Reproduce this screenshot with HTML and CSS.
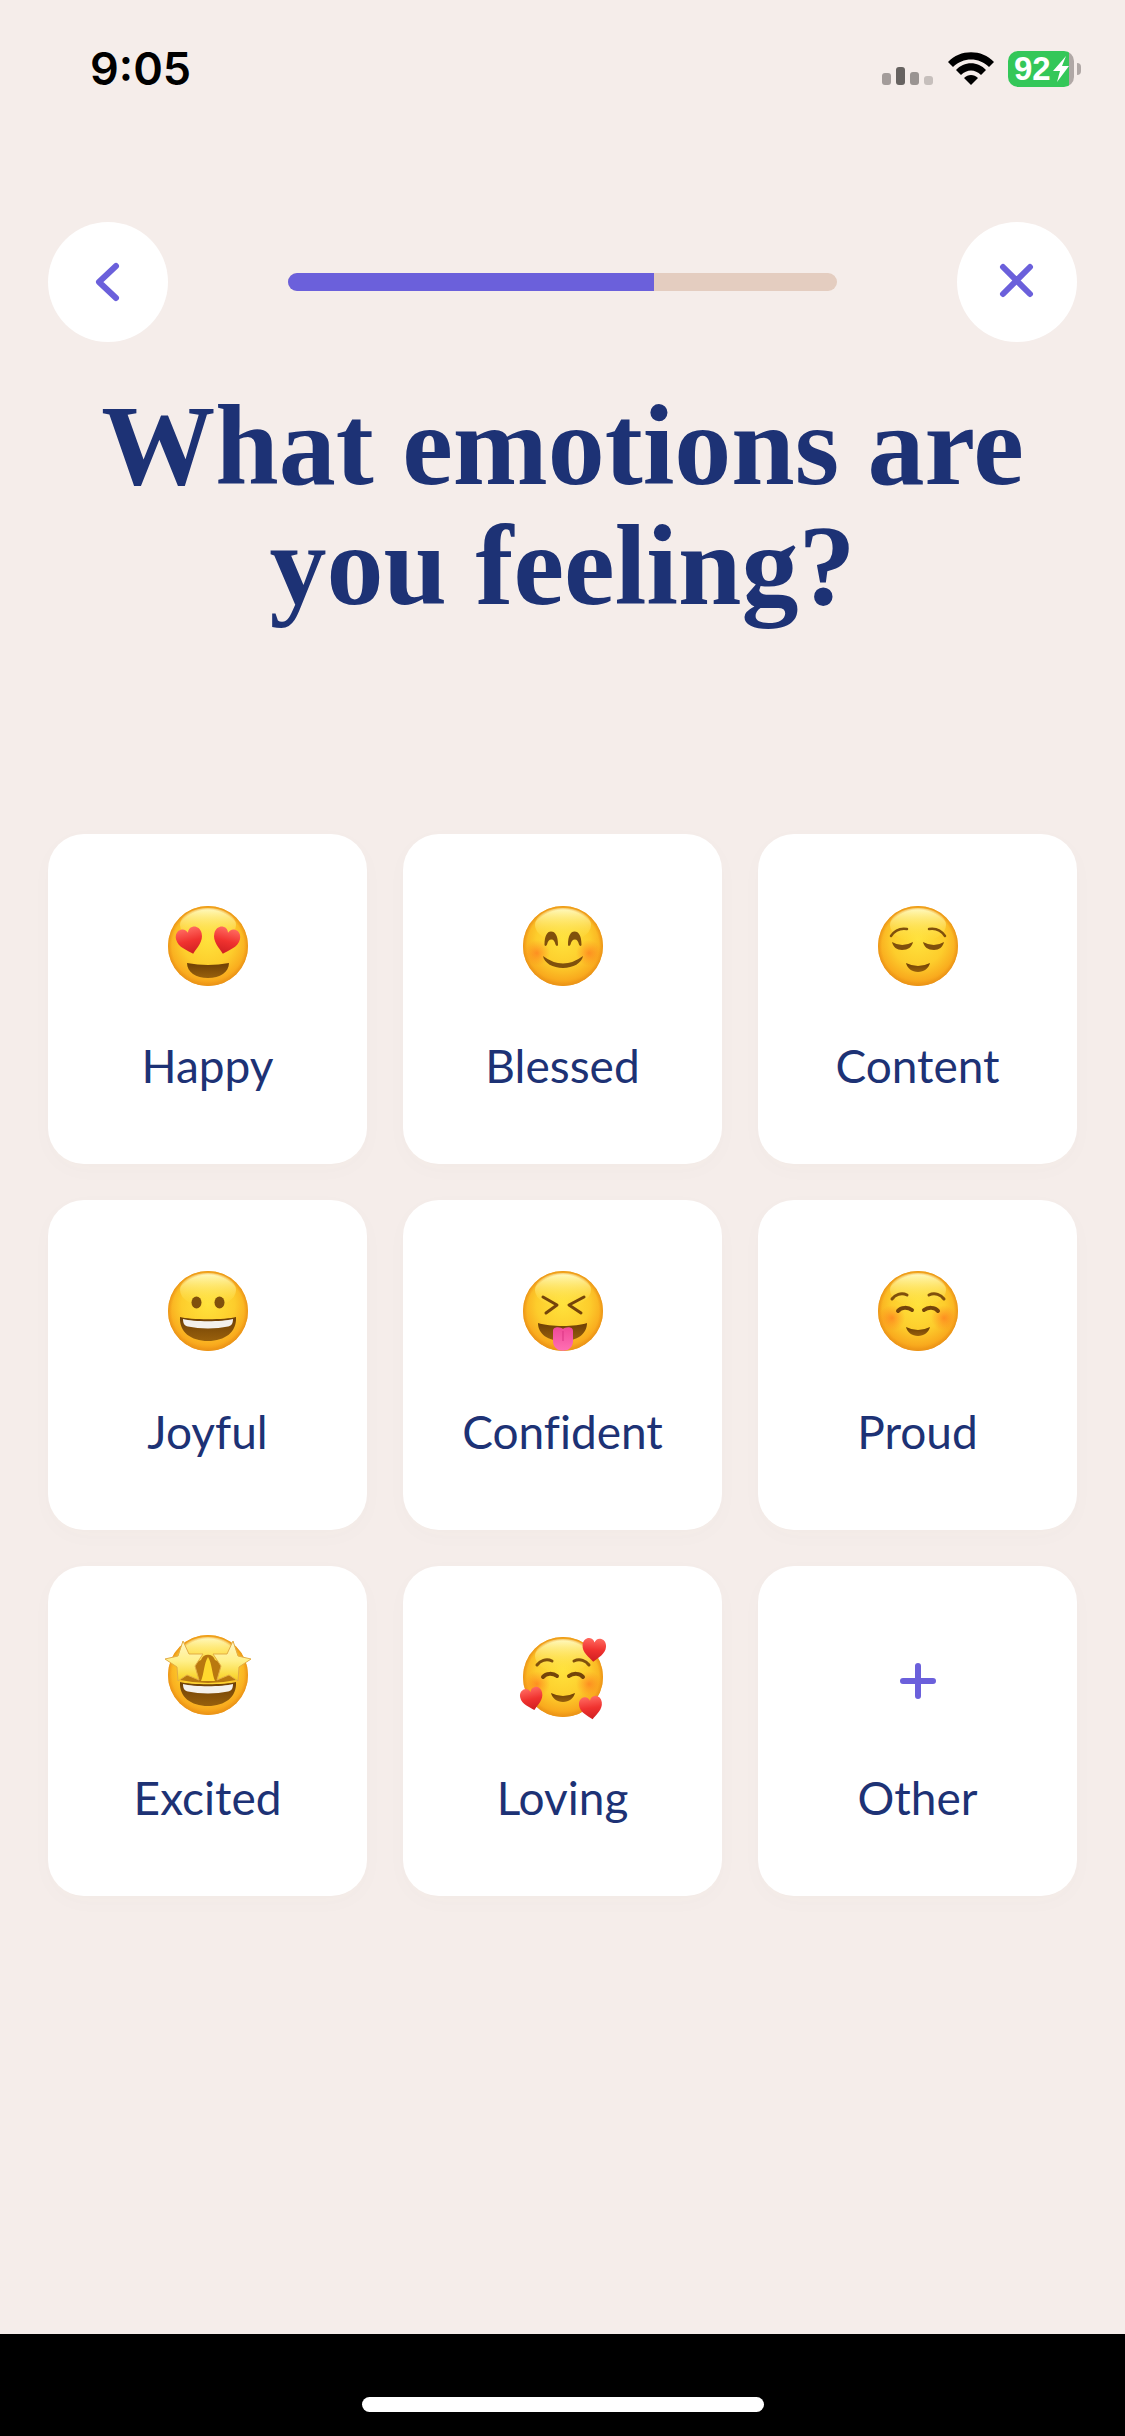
FILE: index.html
```html
<!DOCTYPE html>
<html lang="en">
<head>
<meta charset="utf-8">
<meta name="viewport" content="width=device-width, initial-scale=1">
<title>What emotions are you feeling?</title>
<link rel="stylesheet" href="styles.css">
</head>
<body>
<div class="screen">
  <div class="status">
    <span class="status-time">9:05</span>
    <div class="status-icons">
      <svg class="signal" viewBox="0 0 52 36" aria-hidden="true">
        <rect x="0" y="22" width="9" height="12" rx="3" fill="#a39c9a"/>
        <rect x="14" y="16" width="9" height="18" rx="3" fill="#676361"/>
        <rect x="28" y="21" width="9" height="13" rx="3" fill="#9a9492"/>
        <rect x="42" y="25" width="9" height="9" rx="3" fill="#c6bfbc"/>
      </svg>
      <svg class="wifi" viewBox="0 0 46 36" aria-hidden="true">
        <path d="M0 11 C12 -2 34 -2 46 11 L41 16 C31 6 15 6 5 16 Z"/>
        <path d="M8 19 C16 10 30 10 38 19 L33 24 C27 18 19 18 13 24 Z"/>
        <path d="M16 27 C20 23 26 23 30 27 L23 34 Z"/>
      </svg>
      <div class="battery">
        <span class="battery-body"><span class="battery-level">92</span>
          <svg class="bolt" viewBox="0 0 16 26" aria-hidden="true"><path d="M13 0 L0 15 H7 L4 26 L16 10 H9 Z" fill="#fff"/></svg>
        </span>
        <span class="battery-cap"></span>
      </div>
    </div>
  </div>

  <header class="topbar">
    <button class="round" type="button" aria-label="Back">
      <svg viewBox="0 0 48 48" aria-hidden="true"><path d="M32 8 L15 24 L32 40"/></svg>
    </button>
    <progress class="steps" value="2" max="3" aria-label="Progress"></progress>
    <button class="round" type="button" aria-label="Close">
      <svg viewBox="0 0 48 48" aria-hidden="true"><path d="M10 9 L37 36 M37 9 L10 36"/></svg>
    </button>
  </header>

  <main class="content">
    <h1 class="title">What emotions are you feeling?</h1>
    <div class="grid">
      <button class="card" type="button">
        <svg class="emoji" viewBox="0 0 96 96" aria-hidden="true">
          <defs>
            <radialGradient id="face" cx=".5" cy=".42" r=".6">
              <stop offset="0" stop-color="#ffe23c"/><stop offset=".55" stop-color="#fdcd2c"/>
              <stop offset=".84" stop-color="#f9ab1e"/><stop offset="1" stop-color="#ea8c12"/>
            </radialGradient>
            <radialGradient id="rim">
              <stop offset=".9" stop-color="#f09a18" stop-opacity="0"/><stop offset="1" stop-color="#ea9418"/>
            </radialGradient>
            <linearGradient id="shine" x1="0" y1="0" x2="0" y2="1">
              <stop offset="0" stop-color="#fffbc4"/><stop offset="1" stop-color="#ffe63f" stop-opacity="0"/>
            </linearGradient>
            <radialGradient id="blush">
              <stop offset="0" stop-color="#ff6a1c" stop-opacity=".6"/><stop offset="1" stop-color="#ff7a1c" stop-opacity="0"/>
            </radialGradient>
            <linearGradient id="red" x1="0" y1="0" x2="0" y2="1">
              <stop offset="0" stop-color="#ff6a60"/><stop offset=".5" stop-color="#f0322f"/><stop offset="1" stop-color="#cf1f22"/>
            </linearGradient>
            <linearGradient id="brown" x1="0" y1="0" x2="0" y2="1">
              <stop offset="0" stop-color="#6e3f05"/><stop offset="1" stop-color="#98600c"/>
            </linearGradient>
            <linearGradient id="gold" x1="0" y1="0" x2="0" y2="1">
              <stop offset="0" stop-color="#fff6c8"/><stop offset=".5" stop-color="#fff08a"/><stop offset="1" stop-color="#f8cf1c"/>
            </linearGradient>
            <linearGradient id="tongue" x1="0" y1="0" x2="0" y2="1">
              <stop offset="0" stop-color="#f04a97"/><stop offset="1" stop-color="#ff6fb4"/>
            </linearGradient>
            <g id="head">
              <circle cx="48" cy="48" r="40" fill="url(#face)"/>
              <ellipse cx="48" cy="27" rx="28" ry="17" fill="url(#shine)"/>
              <circle cx="48" cy="48" r="40" fill="url(#rim)"/>
            </g>
            <g id="cheeks"><circle cx="22" cy="55" r="13" fill="url(#blush)"/><circle cx="74" cy="55" r="13" fill="url(#blush)"/></g>
            <path id="heart" d="M0 14 C-5 9 -14 4 -14 -5 C-14 -11 -10 -14 -6.500 -14 C-3 -14 -1 -12 0 -9 C1 -12 3 -14 6.500 -14 C10 -14 14 -11 14 -5 C14 4 5 9 0 14Z" fill="url(#red)"/>
            <g id="brows" fill="none" stroke="#80500c" stroke-width="3" stroke-linecap="round">
              <path d="M22 36 C25 32 31 29 37 32"/><path d="M74 36 C71 32 65 29 59 32"/>
            </g>
            <g id="smile" fill="url(#brown)">
              <path d="M36 64 Q48 70 60 64 C59 69 54 73 48 73 C42 73 37 69 36 64Z"/>
            </g>
            <g id="soft-eyes" fill="none" stroke="#74440a" stroke-width="4" stroke-linecap="round">
              <path d="M28 47 C31 43 38 43 42 46"/><path d="M68 47 C65 43 58 43 54 46"/>
            </g>
            <g id="grin">
              <path d="M20 53 C30 56 66 56 76 53 C77 68 65 77 48 77 C31 77 19 68 20 53Z" fill="url(#brown)"/>
              <path d="M23 55 C34 58 62 58 73 55 C73 60 71 62 68 62.500 C56 65 40 65 28 62.500 C25 62 23 60 23 55Z" fill="#f4f1ec"/>
            </g>
          </defs>
          <use href="#head"/>
          <use href="#heart" transform="translate(30 43) rotate(-14) scale(.94)"/>
          <use href="#heart" transform="translate(66 43) rotate(14) scale(.94)"/>
          <path d="M27 65 Q48 69 69 65 C69 74 60 80 48 80 C36 80 27 74 27 65Z" fill="url(#brown)"/>
        </svg>
        <span>Happy</span>
      </button>
      <button class="card" type="button">
        <svg class="emoji" viewBox="0 0 96 96" aria-hidden="true">
          <use href="#head"/><use href="#cheeks"/>
          <g fill="#80500c">
            <path id="arch" d="M29.500 47 C29.500 38 32 33.500 36 33.500 C40.500 33.500 43 38 43 47 C42.500 48.500 41 48 40.500 46.500 C39.500 43 38.500 41.500 36.500 41.500 C34 41.500 33 43 32 46.500 C31.500 48 30 48.500 29.500 47Z"/>
            <use href="#arch" x="23.500"/>
          </g>
          <path d="M28 58 Q48 73 68 58 C67 65 58 70 48 70 C38 70 29 65 28 58Z" fill="#80500c"/>
        </svg>
        <span>Blessed</span>
      </button>
      <button class="card" type="button">
        <svg class="emoji" viewBox="0 0 96 96" aria-hidden="true">
          <use href="#head"/>
          <g fill="none" stroke="#80500c" stroke-width="2.500" stroke-linecap="round">
            <path d="M21 38 C25 32 31 30 37 31"/><path d="M75 38 C71 32 65 30 59 31"/>
          </g>
          <g fill="#80500c">
            <path d="M22 44 Q32 50 43 44 C42 49 38 52 32 52 C27 52 23 49 22 44Z"/>
            <path d="M74 44 Q64 50 53 44 C54 49 58 52 64 52 C69 52 73 49 74 44Z"/>
          </g>
          <use href="#smile" y="1"/>
        </svg>
        <span>Content</span>
      </button>
      <button class="card" type="button">
        <svg class="emoji" viewBox="0 0 96 96" aria-hidden="true">
          <use href="#head" y="-1"/>
          <ellipse cx="36.500" cy="38.500" rx="5" ry="6" fill="#80500c"/><ellipse cx="59.500" cy="38.500" rx="5" ry="6" fill="#80500c"/>
          <use href="#grin"/>
        </svg>
        <span>Joyful</span>
      </button>
      <button class="card" type="button">
        <svg class="emoji" viewBox="0 0 96 96" aria-hidden="true">
          <use href="#head" y="-1"/>
          <g fill="none" stroke="#74440a" stroke-width="3" stroke-linecap="round" stroke-linejoin="round">
            <path d="M28 33 L42 41 L31 49"/><path d="M69 33 L54 41 L66 49"/>
          </g>
          <path d="M23 59 C35 63 61 63 72 59 C72 70 62 77 48 77 C33 77 23 70 23 59Z" fill="url(#brown)"/>
          <path d="M38 67 C38 62 46 63 48 65 C50 63 58 62 58 67 V77 C58 90 38 90 38 77Z" fill="url(#tongue)"/>
          <path d="M48 67 V77" stroke="#d93483" stroke-width="1"/>
        </svg>
        <span>Confident</span>
      </button>
      <button class="card" type="button">
        <svg class="emoji" viewBox="0 0 96 96" aria-hidden="true">
          <use href="#head" y="-1"/><use href="#cheeks" y="-1"/><use href="#brows" y="-1"/><use href="#soft-eyes"/><use href="#smile" y="-1"/>
        </svg>
        <span>Proud</span>
      </button>
      <button class="card" type="button">
        <svg class="emoji" viewBox="0 0 96 96" aria-hidden="true">
          <use href="#head" y="-3"/>
          <path d="M20 50 C22 38 36 32 41 30 C43 23 53 23 55 30 C60 32 74 38 76 50 Q48 56 20 50Z" fill="#b9780f"/>
          <path d="M48 27 C52 33 52 44 55 51 H41 C44 44 44 33 48 27Z" fill="#ffd92e"/>
          <g fill="url(#gold)" stroke="#e3ad45" stroke-width="1" stroke-linejoin="round">
            <path d="M23 11 L29 24 L43 24 L35 36 L39 50 L27 45 L18 51 L17 37 L5 29 L18 26Z"/>
            <path d="M73 11 L67 24 L53 24 L61 36 L57 50 L69 45 L78 51 L79 37 L91 29 L78 26Z"/>
          </g>
          <use href="#grin" y="-1"/>
        </svg>
        <span>Excited</span>
      </button>
      <button class="card" type="button">
        <svg class="emoji" viewBox="0 0 96 96" aria-hidden="true">
          <use href="#head" y="-1"/><use href="#cheeks" y="-1"/><use href="#brows" y="-1"/><use href="#soft-eyes"/><use href="#smile" y="-1"/>
          <use href="#heart" transform="translate(79 20) rotate(4) scale(.84)"/>
          <use href="#heart" transform="translate(17 69) rotate(-12) scale(.8)"/>
          <use href="#heart" transform="translate(76 78) rotate(-8) scale(.82)"/>
        </svg>
        <span>Loving</span>
      </button>
      <button class="card" type="button">
        <svg class="emoji" viewBox="0 0 96 96" aria-hidden="true">
          <path d="M48 36 V66 M33 51 H63" stroke="#6b60db" stroke-width="6" stroke-linecap="round"/>
        </svg>
        <span>Other</span>
      </button>
    </div>
  </main>

  <footer class="homebar"><span class="home-indicator"></span></footer>
</div>
</body>
</html>
```
FILE: styles.css
```css
* {
  box-sizing: border-box;
}

body {
  margin: 0;
  background: #f5edea;
  color: #1d3275;
  font-family: Lato, "Open Sans", sans-serif;
}

.screen {
  display: flex;
  flex-direction: column;
  min-height: 100vh;
}

.status {
  display: flex;
  justify-content: space-between;
  align-items: center;
  height: 138px;
  padding: 0 44px 0 90px;
  color: #000;
}

.status-time {
  font: 600 45px/48px Inter, sans-serif;
}

.status-icons {
  display: flex;
  align-items: center;
  gap: 14px;
}

.signal {
  width: 52px;
  height: 36px;
}

.wifi {
  width: 46px;
  height: 36px;
}

.battery {
  display: flex;
  align-items: center;
  gap: 3px;
}

.battery-body {
  display: flex;
  align-items: center;
  gap: 2px;
  width: 66px;
  height: 36px;
  padding-left: 6px;
  border-radius: 10px;
  background: linear-gradient(to right, #34c759 61px, #b0a8a6 61px);
}

.battery-level {
  color: #fff;
  font: 700 33px/36px "Liberation Sans", sans-serif;
}

.bolt {
  width: 16px;
  height: 26px;
}

.battery-cap {
  width: 4px;
  height: 12px;
  border-radius: 0 4px 4px 0;
  background: #b0a8a6;
}

.topbar {
  display: flex;
  align-items: center;
  gap: 120px;
  margin-top: 84px;
  padding: 0 48px;
}

.round {
  display: flex;
  flex: none;
  align-items: center;
  justify-content: center;
  width: 120px;
  height: 120px;
  padding: 0;
  border: 0;
  border-radius: 50%;
  background: #fff;
}

.round svg {
  width: 48px;
  height: 48px;
  fill: none;
  stroke: #6b60db;
  stroke-width: 6;
  stroke-linecap: round;
  stroke-linejoin: round;
}

.steps {
  appearance: none;
  flex: 1;
  min-width: 0;
  height: 18px;
  border: 0;
  border-radius: 9px;
  overflow: hidden;
  background: #e4cdc0;
}

.steps::-webkit-progress-bar {
  background: #e4cdc0;
}

.steps::-webkit-progress-value {
  background: #6b60db;
}

.content {
  flex: 1;
  padding: 44px 48px 48px;
}

.title {
  margin: 0;
  font: 700 114px/120px "Liberation Serif", serif;
  text-align: center;
}

.grid {
  display: grid;
  grid-template-columns: repeat(3, 1fr);
  gap: 36px;
  margin-top: 208px;
}

.card {
  display: flex;
  flex-direction: column;
  align-items: center;
  gap: 42px;
  min-height: 330px;
  padding: 64px 12px 48px;
  border: 0;
  border-radius: 36px;
  background: #fff;
  box-shadow: 0 6px 24px rgba(90, 80, 40, 0.02);
  color: inherit;
  font: 400 46px/60px Lato, "Open Sans", sans-serif;
  font-variant-ligatures: none;
}

.emoji {
  width: 96px;
  height: 96px;
}

.homebar {
  display: flex;
  justify-content: center;
  align-items: flex-end;
  height: 102px;
  padding-bottom: 24px;
  background: #000;
}

.home-indicator {
  width: 402px;
  height: 15px;
  border-radius: 8px;
  background: #fff;
}
```
